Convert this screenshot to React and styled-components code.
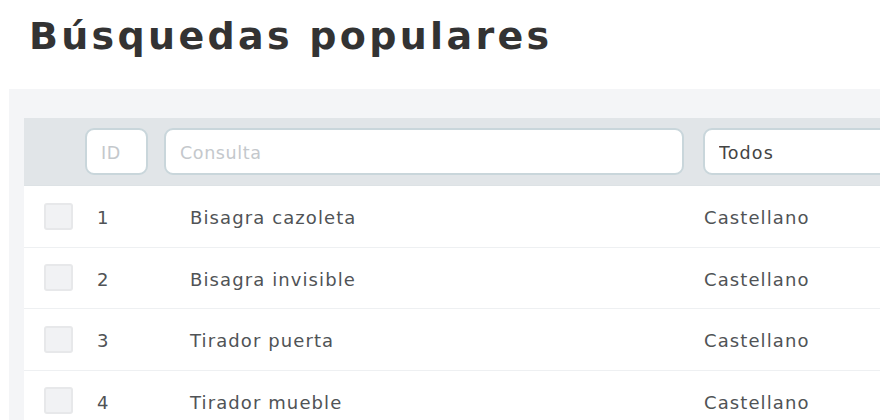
import React from "react";
import styled, { createGlobalStyle } from "styled-components";

const GlobalStyle = createGlobalStyle`
  html, body {
    margin: 0;
    padding: 0;
    background: #ffffff;
    font-family: "DejaVu Sans", "Liberation Sans", sans-serif;
    overflow: hidden;
  }
`;

const Page = styled.div`
  width: 880px;
  height: 420px;
  overflow: hidden;
`;

const Title = styled.h1`
  margin: 0;
  padding: 11px 0 0 29px;
  height: 78px;
  box-sizing: border-box;
  font-size: 38px;
  font-weight: 700;
  letter-spacing: 3.3px;
  color: #333333;
  line-height: 50px;
  white-space: nowrap;
`;

const Panel = styled.section`
  margin-left: 9px;
  margin-top: 11px;
  padding: 29px 0 0 15px;
  background: #f4f5f7;
  height: 400px;
`;

const Table = styled.div`
  background: #ffffff;
  width: 1000px;
`;

const cols = "61px 79px 539px 1fr";

const HeaderRow = styled.div`
  display: grid;
  grid-template-columns: ${cols};
  align-items: center;
  height: 68px;
  background: #e1e5e8;
  border-bottom: 1px solid #dde2e5;
  box-sizing: border-box;
`;

const FilterInput = styled.input`
  box-sizing: border-box;
  height: 47px;
  width: ${(p) => p.$width}px;
  border: 2px solid #c9d6db;
  border-radius: 9px;
  background: #ffffff;
  padding: 3px 14px 0;
  font-family: inherit;
  font-size: 17.5px;
  letter-spacing: 1.1px;
  color: #444444;
  outline: none;
  &::placeholder {
    color: #c4c8cc;
    letter-spacing: 0.6px;
  }
`;

const Row = styled.div`
  display: grid;
  grid-template-columns: ${cols};
  align-items: center;
  height: 61.5px;
  box-sizing: border-box;
  border-bottom: 1px solid #eef0f2;
`;

const Check = styled.span`
  display: block;
  margin-left: 20px;
  width: 29px;
  height: 27px;
  box-sizing: border-box;
  border: 2px solid #e7e8ea;
  border-radius: 3px;
  background: #f1f2f4;
`;

const Cell = styled.span`
  padding: 3px 0 0 ${(p) => p.$indent || 0}px;
  font-size: 18px;
  letter-spacing: 1.1px;
  color: #505356;
  white-space: nowrap;
`;

const rows = [
  { id: 1, query: "Bisagra cazoleta", lang: "Castellano" },
  { id: 2, query: "Bisagra invisible", lang: "Castellano" },
  { id: 3, query: "Tirador puerta", lang: "Castellano" },
  { id: 4, query: "Tirador mueble", lang: "Castellano" },
];

const App = () => {
  return (
    <Page>
      <GlobalStyle />
      <Title>Búsquedas populares</Title>
      <Panel>
        <Table>
          <HeaderRow>
            <span />
            <FilterInput $width={63} placeholder="ID" />
            <FilterInput $width={520} placeholder="Consulta" />
            <FilterInput $width={260} defaultValue="Todos" />
          </HeaderRow>
          {rows.map((row) => (
            <Row key={row.id}>
              <Check />
              <Cell $indent={12}>{row.id}</Cell>
              <Cell $indent={26}>{row.query}</Cell>
              <Cell $indent={1}>{row.lang}</Cell>
            </Row>
          ))}
        </Table>
      </Panel>
    </Page>
  );
};

export default App;
